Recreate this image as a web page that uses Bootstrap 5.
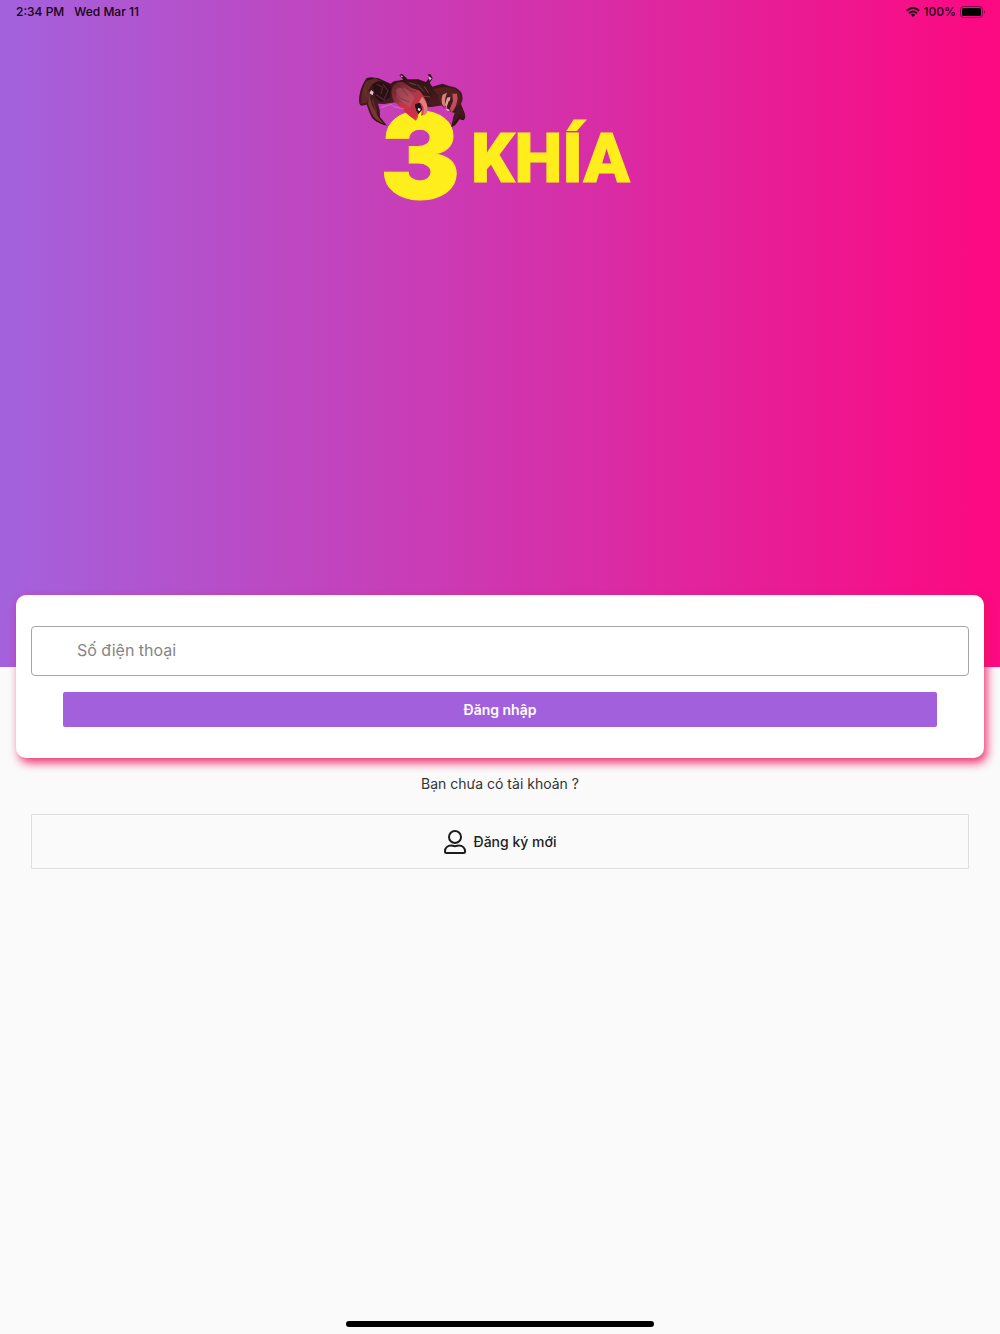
<!DOCTYPE html>
<html lang="vi">
<head>
<meta charset="utf-8">
<meta name="viewport" content="width=device-width, initial-scale=1">
<title>3 Khía</title>
<link href="https://cdn.jsdelivr.net/npm/bootstrap@5.3.0/dist/css/bootstrap.min.css" rel="stylesheet">
<style>
body { font-family: Inter, "Noto Sans", sans-serif; font-size: 14px; line-height: 20px; background: #fafafa; color: #333; }
.hero { height: 50vh; background: linear-gradient(90deg, #a461dc 1%, #fb0a82 98%); }
.status { height: 24px; padding: 0 15px 0 16px; font-size: 12px; font-weight: 500; color: #15000f; }
.status-time { gap: 10px; }
.brand-logo { width: 280px; height: 136px; margin-top: 46px; overflow: visible; }
.brand-logo text { font-weight: 900; fill: #fdee1c; stroke: #fdee1c; stroke-width: 1; }
.brand-digit { font-family: Inter, sans-serif; font-size: 120px; }
.brand-word { font-family: Roboto, sans-serif; font-size: 68px; }
.login-card { margin-top: -72px; padding: 31px 15px; border: 0; border-radius: 10px; box-shadow: 3px 5px 10px rgba(235, 20, 90, .85); }
.phone-input { height: 50px; padding: 0 45px 2px; font-size: 16px; border: 1px solid #a5a5a5; border-radius: 4px; }
.phone-input::placeholder { color: #858585; }
.login-btn { height: 35px; padding: 0; font-size: 14px; font-weight: 600; color: #fff; background: #a260dc; border: 0; border-radius: 2px; }
.login-btn:hover { color: #fff; background: #9150cc; }
.register-row { padding: 0 15px; }
.register-btn { height: 55px; padding: 0; font-size: 14px; font-weight: 500; color: #222; border: 1px solid #dedede; border-radius: 1px; }
.home-bar { width: 308px; height: 6px; border-radius: 3px; background: #000; margin-bottom: 7px; }
</style>
<script src="https://cdn.jsdelivr.net/npm/bootstrap@5.3.0/dist/js/bootstrap.bundle.min.js"></script>
</head>
<body>
<div class="d-flex flex-column min-vh-100">
  <header class="hero d-flex flex-column align-items-center">
    <div class="status w-100 d-flex align-items-center justify-content-between">
      <div class="status-time d-flex"><span>2:34 PM</span><span>Wed Mar 11</span></div>
      <div class="d-flex align-items-center gap-1">
        <svg width="14" height="10" viewBox="0 0 14 10" fill="none" stroke="#15000f" stroke-width="2" aria-hidden="true"><path d="M.8 3.8Q7-1.8 13.2 3.8M3.1 6.2Q7 2.8 10.9 6.2"/><path d="M4.9 7.7Q7 6 9.1 7.7L7 9.9z" fill="#15000f" stroke="none"/></svg>
        <span>100%</span>
        <svg width="25" height="12" viewBox="0 0 25 12" aria-hidden="true"><rect x=".5" y=".5" width="22" height="11" rx="3" fill="none" stroke="#15000f" stroke-opacity=".45"/><rect x="2" y="2" width="19" height="8" rx="1.5"/><path d="M24 4q2 2 0 4z" fill="#15000f" fill-opacity=".5"/></svg>
      </div>
    </div>
    <svg class="brand-logo" viewBox="360 70 280 136" role="img" aria-label="3 Khía">
      <defs>
        <linearGradient id="shell" x1="0" y1="0" x2="0" y2="1"><stop offset="0" stop-color="#2b1016"/><stop offset=".55" stop-color="#4a1b20"/><stop offset="1" stop-color="#2c0d13"/></linearGradient>
        <linearGradient id="claw" x1="0" y1="0" x2="1" y2="1"><stop offset="0" stop-color="#5d2026"/><stop offset=".45" stop-color="#a83a4c"/><stop offset=".75" stop-color="#cf2f45"/><stop offset="1" stop-color="#e98272"/></linearGradient>
      </defs>
      <text class="brand-digit" x="380" y="199">3</text>
      <text class="brand-word" x="471" y="182">KHÍA</text>
      <g transform="translate(350 65) scale(.3333)">
        <path d="M50 39Q33 62 28 92Q24 118 34 122L50 119Q57 142 66 158Q78 174 111 182L90 156Q91 133 84 116L103 117L135 112L169 130L245 126L282 120L300 140L315 144L310 164Q302 180 305 186Q317 183 328 163L341 166Q349 158 344 145L333 116Q342 103 334 82Q318 64 300 64L277 56L247 65L239 53L248 40L241 27L234 28L238 38L228 51L205 43L173 43L156 26L148 31L160 44L132 49L122 56L85 40L63 37Z" fill="url(#shell)"/>
        <path d="M48 48Q32 77 34 116L51 112L66 88L55 77L65 60Q82 44 95 49L76 40Z" fill="#5f2928"/>
        <path d="M59 88Q61 120 78 140Q84 160 103 176Q75 168 64 143L54 116Z" fill="#76382f"/>
        <path d="M69 57Q84 49 104 55L123 64L119 98L94 111L76 98Z" fill="#271014"/>
        <path d="M80 57L98 67L93 87M99 58L114 77L103 101M43 66L49 95M67 104L80 142M78 89L105 106" fill="none" stroke="#75403b" stroke-width="4" opacity=".5"/>
        <path d="M151 48L197 49L231 64L246 91L236 113L211 78L174 66Z" fill="#3b1718"/>
        <path d="M178 53L198 60M202 59L221 79M216 93L240 96M223 65L235 83" stroke="#744139" stroke-width="3" fill="none"/>
        <path d="M127 66Q137 49 158 51L184 68L209 77Q231 103 233 130Q233 148 213 153L216 131L207 114L195 124L198 139L205 147Q205 161 197 167Q172 150 150 125L131 107Q121 88 127 66Z" fill="url(#claw)"/>
        <path d="M139 73Q156 60 177 78L193 97L181 130Q153 112 139 94Z" fill="#bb6671" opacity=".4"/>
        <path d="M147 109Q177 121 196 148L195 160Q169 147 148 122Z" fill="#cf2f47" opacity=".8"/>
        <path d="M207 112Q226 119 220 150Q235 149 232 125Q228 106 216 95Z" fill="#e08078"/>
        <path d="M195 117L210 113L217 134L205 148L198 137Z" fill="#211017"/>
        <path d="M204 129L212 131L210 138L203 136Z" fill="#eadde8"/>
        <path d="M138 58L157 70L173 92M158 55L179 76L198 80M133 79L151 100L178 111" stroke="#5a2430" stroke-width="3" fill="none" opacity=".5"/>
        <path d="M249 73Q282 60 315 72Q337 83 331 104L321 124L310 139L303 129L309 105L297 91L285 101L283 130L270 116L264 90Z" fill="#52201f"/>
        <path d="M278 89L291 83L286 99L284 126Q274 122 275 101Z" fill="#d9817b"/>
        <path d="M307 86L321 86Q326 109 313 132L303 145L300 130L309 108Z" fill="#bd505a"/>
        <path d="M291 98L301 95L299 117L291 132L285 119Z" fill="#e0a098"/>
        <path d="M296 109L304 104L298 137L290 126Z" fill="#441723"/>
        <path d="M316 139L331 122L343 145L338 159L326 147L320 164L307 180L309 159Z" fill="#42191d"/>
        <path d="M59 85L63 75L71 81L68 91ZM290 131L299 134L298 139L288 135ZM151 29L155 37L160 36ZM236 34L245 40L239 47Z" fill="#ddc1db"/>
        <path d="M93 128L112 121L126 119L132 125L163 132" stroke="#b7a2bd" stroke-width="3" fill="none" opacity=".6"/>
      </g>
    </svg>
  </header>
  <main class="px-3 d-flex flex-column">
    <form class="login-card card">
      <input class="phone-input form-control" id="phone" type="tel" placeholder="Số điện thoại" aria-label="Số điện thoại">
      <div class="d-grid px-3 mt-3 mx-3"><button class="login-btn btn" type="submit">Đăng nhập</button></div>
    </form>
    <p class="text-center mt-3 mb-0">Bạn chưa có tài khoản ?</p>
    <div class="register-row d-grid mt-3 pt-1">
      <button class="register-btn btn d-flex align-items-center justify-content-center gap-2" type="button">
        <svg width="22" height="24" viewBox="0 0 22 24" fill="none" stroke="#1c1c1c" stroke-width="2" aria-hidden="true"><circle cx="11" cy="7" r="6"/><path d="M7 15.5C3.5 15.5 1 18 1 21v.5Q1 23 2.5 23h17q1.500 0 1.500-1.500V21c0-3-2.500-5.500-6-5.500-1.500 0-2 .7-4 .7s-2.500-.7-4-.7z"/></svg>
        <span>Đăng ký mới</span>
      </button>
    </div>
  </main>
  <footer class="mt-auto d-flex justify-content-center"><div class="home-bar"></div></footer>
</div>
</body>
</html>
